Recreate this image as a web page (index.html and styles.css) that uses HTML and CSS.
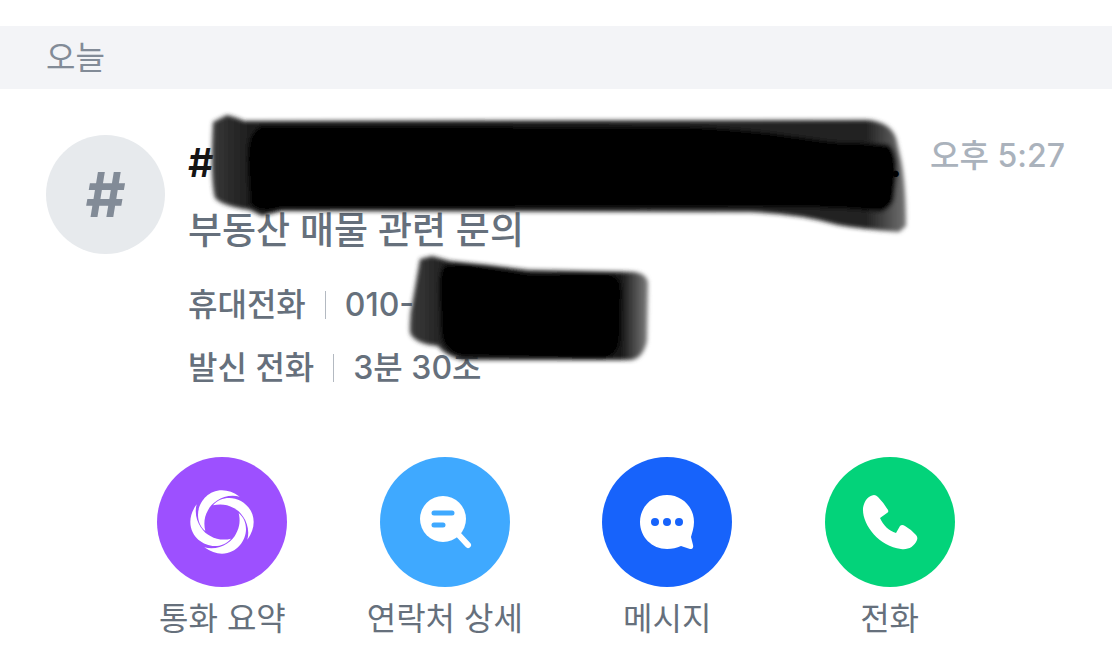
FILE: index.html
```
<!DOCTYPE html>
<html lang="ko">
<head>
    <meta charset="UTF-8">
    <meta name="viewport" content="width=device-width, initial-scale=1.0">
    <title>통화 기록</title>
    <link rel="stylesheet" href="styles.css">
</head>
<body>
    <h2 class="date-bar">오늘</h2>

    <main class="call">
        <div class="call-info">
            <div class="avatar">#</div>
            <div class="call-body">
                <div class="title">
                    <span>#</span>
                    <span class="ellipsis">...</span>
                    <svg class="marker title-marker" viewBox="200 105 720 140" aria-hidden="true">
                        <defs>
                            <filter id="soft"><feGaussianBlur stdDeviation="2"/></filter>
                            <linearGradient id="title-fade" gradientUnits="userSpaceOnUse" x1="210" y1="0" x2="908" y2="0">
                                <stop offset="0" stop-color="#3a3a3a"/>
                                <stop offset="0.06" stop-color="#1c1c1c"/>
                                <stop offset="0.94" stop-color="#222"/>
                                <stop offset="1" stop-color="#777"/>
                            </linearGradient>
                        </defs>
                        <g filter="url(#soft)">
                            <path fill="url(#title-fade)" d="M213 122 L227 115 Q238 118 244 121 L868 120 Q890 122 896 138 L901 160 Q906 185 906 226 L899 232 Q860 229 838 225 Q800 214 750 212 L282 211 L262 216 L250 210 Q222 206 215 198 Q210 180 213 122Z"/>
                            <path fill="#050505" d="M262 126 L700 127 C760 130 800 138 835 142 L888 144 Q898 150 897 175 L894 200 Q890 210 880 212 Q850 207 740 207 L280 208 Q262 215 250 204 L247 160 Q247 132 262 126Z"/>
                        </g>
                    </svg>
                </div>
                <div class="subtitle">부동산 매물 관련 문의</div>
                <div class="detail phone">
                    <span>휴대전화</span>
                    <span class="divider"></span>
                    <span>010-</span>
                    <svg class="marker phone-marker" viewBox="400 245 260 125" aria-hidden="true">
                        <defs>
                            <linearGradient id="phone-fade" gradientUnits="userSpaceOnUse" x1="409" y1="0" x2="650" y2="0">
                                <stop offset="0" stop-color="#3c3c3c"/>
                                <stop offset="0.15" stop-color="#202020"/>
                                <stop offset="0.88" stop-color="#161616"/>
                                <stop offset="1" stop-color="#858585"/>
                            </linearGradient>
                        </defs>
                        <g filter="url(#soft)">
                            <path fill="url(#phone-fade)" d="M420 258 L432 255 L450 260 Q500 265 528 269 L634 271 Q648 273 648 283 L647 340 Q643 358 630 359 L462 359 Q444 354 438 345 Q415 343 410 332 Q409 315 413 298Z"/>
                            <path fill="#050505" d="M445 264 L466 263 Q510 270 530 273 L610 273 Q623 278 622 295 L620 340 Q615 357 602 358 L465 355 Q446 354 441 335 L439 290 Q438 270 445 264Z"/>
                        </g>
                    </svg>
                </div>
                <div class="detail">
                    <span>발신 전화</span>
                    <span class="divider"></span>
                    <span>3분 30초</span>
                </div>
            </div>
            <time class="time" datetime="17:27">오후 5:27</time>
        </div>

        <div class="actions">
            <button type="button" class="action">
                <span class="action-icon summary">
                    <svg viewBox="-195 -195 390 390" fill="#fff">
                        <defs>
                            <path id="blade" d="M53 -76 C35 -89 18 -95 0 -95 C-45 -95 -72 -55 -72 -22 C-72 -2 -65 14 -50 27 C-55 8 -54 -15 -42 -35 C-32 -58 8 -88 53 -76Z"/>
                        </defs>
                        <use href="#blade"/>
                        <use href="#blade" transform="rotate(90)"/>
                        <use href="#blade" transform="rotate(180)"/>
                        <use href="#blade" transform="rotate(270)"/>
                    </svg>
                </span>
                통화 요약
            </button>
            <button type="button" class="action">
                <span class="action-icon contact">
                    <svg viewBox="0 0 130 130" fill="none" stroke-linecap="round">
                        <circle cx="63" cy="62" r="23" fill="#fff"/>
                        <path stroke="#fff" stroke-width="6" d="M76 75 L88 88"/>
                        <path stroke="#3fa9ff" stroke-width="5" d="M54 56 H72 M54 68 H63"/>
                    </svg>
                </span>
                연락처 상세
            </button>
            <button type="button" class="action">
                <span class="action-icon message">
                    <svg viewBox="0 0 130 130">
                        <path fill="#fff" d="M65 38 C80 38 92 50 92 65 C92 71 90 76 89 80 L91 88 Q92 92 88 92 L79 89 C75 91 70 92 65 92 C50 92 38 80 38 65 C38 50 50 38 65 38Z"/>
                        <g fill="#1763fb">
                            <circle cx="53" cy="65" r="4"/>
                            <circle cx="65" cy="65" r="4"/>
                            <circle cx="77" cy="65" r="4"/>
                        </g>
                    </svg>
                </span>
                메시지
            </button>
            <button type="button" class="action">
                <span class="action-icon dial">
                    <svg viewBox="0 0 130 130">
                        <path fill="#fff" d="M47 38.500 Q50 37 53 40 Q59 46 63 53 Q64 55 62 56 L55 61 C58 68 64 74 71 76 L75 69 Q77 67 80 69 Q87 73 91 78 Q93 80 92 83 C89 90 83 93 76 92 C54 89 37 68 38 51 C39 45 42 40 47 38.500Z"/>
                    </svg>
                </span>
                전화
            </button>
        </div>
    </main>
</body>
</html>
```
FILE: styles.css
```
body {
    margin: 0;
    padding-top: 26px;
    background-color: #fff;
    color: #66707c;
    font-family: Inter, "Noto Sans CJK KR", sans-serif;
    font-size: 32px;
    font-weight: 500;
}

.date-bar {
    margin: 0;
    padding: 8px 46px 7px;
    background-color: #f3f4f7;
    color: #828b97;
    font-size: 32px;
    font-weight: 400;
    line-height: 48px;
}

.call-info {
    display: flex;
    align-items: flex-start;
    padding: 46px 47px 0 46px;
}

.avatar {
    flex: none;
    width: 119px;
    height: 119px;
    margin-right: 23px;
    border-radius: 50%;
    background-color: #e7eaed;
    color: #828b97;
    font-size: 62px;
    font-weight: 700;
    line-height: 119px;
    text-align: center;
}

.call-body {
    flex: 1;
    min-width: 0;
    line-height: 48px;
}

.title {
    position: relative;
    display: flex;
    justify-content: space-between;
    padding: 4px 4px 0 0;
    color: #151515;
    font-size: 40px;
    font-weight: 600;
}

.ellipsis {
    z-index: 1;
    color: #000;
}

.subtitle {
    margin: 20px 0 26px;
    font-size: 37px;
}

.detail {
    display: flex;
    align-items: center;
    gap: 19px;
    margin-bottom: 15px;
}

.divider {
    width: 1px;
    height: 28px;
    background-color: #b3b9c1;
}

.phone {
    position: relative;
}

/* marker strokes drawn over the private parts */
.marker {
    position: absolute;
    overflow: visible;
}

.title-marker {
    top: -30px;
    left: 12px;
    width: 720px;
    height: 140px;
}

.phone-marker {
    top: -35px;
    left: 212px;
    width: 260px;
    height: 125px;
}

.time {
    flex: none;
    margin-left: 24px;
    color: #aab2bc;
    font-weight: 500;
    line-height: 42px;
}

.actions {
    display: grid;
    grid-template-columns: repeat(4, 1fr);
    padding: 50px 10% 32px;
}

.action {
    display: flex;
    flex-direction: column;
    align-items: center;
    gap: 12px;
    padding: 0;
    border: none;
    background: none;
    color: inherit;
    font: inherit;
    font-weight: 400;
    line-height: 40px;
    white-space: nowrap;
    cursor: pointer;
}

.action-icon {
    width: 130px;
    height: 130px;
    border-radius: 50%;
}

.action-icon svg {
    display: block;
    width: 100%;
    height: 100%;
}

.summary {
    background-color: #9d50ff;
}

.contact {
    background-color: #3fa9ff;
}

.message {
    background-color: #1763fb;
}

.dial {
    background-color: #03d37a;
}
```
